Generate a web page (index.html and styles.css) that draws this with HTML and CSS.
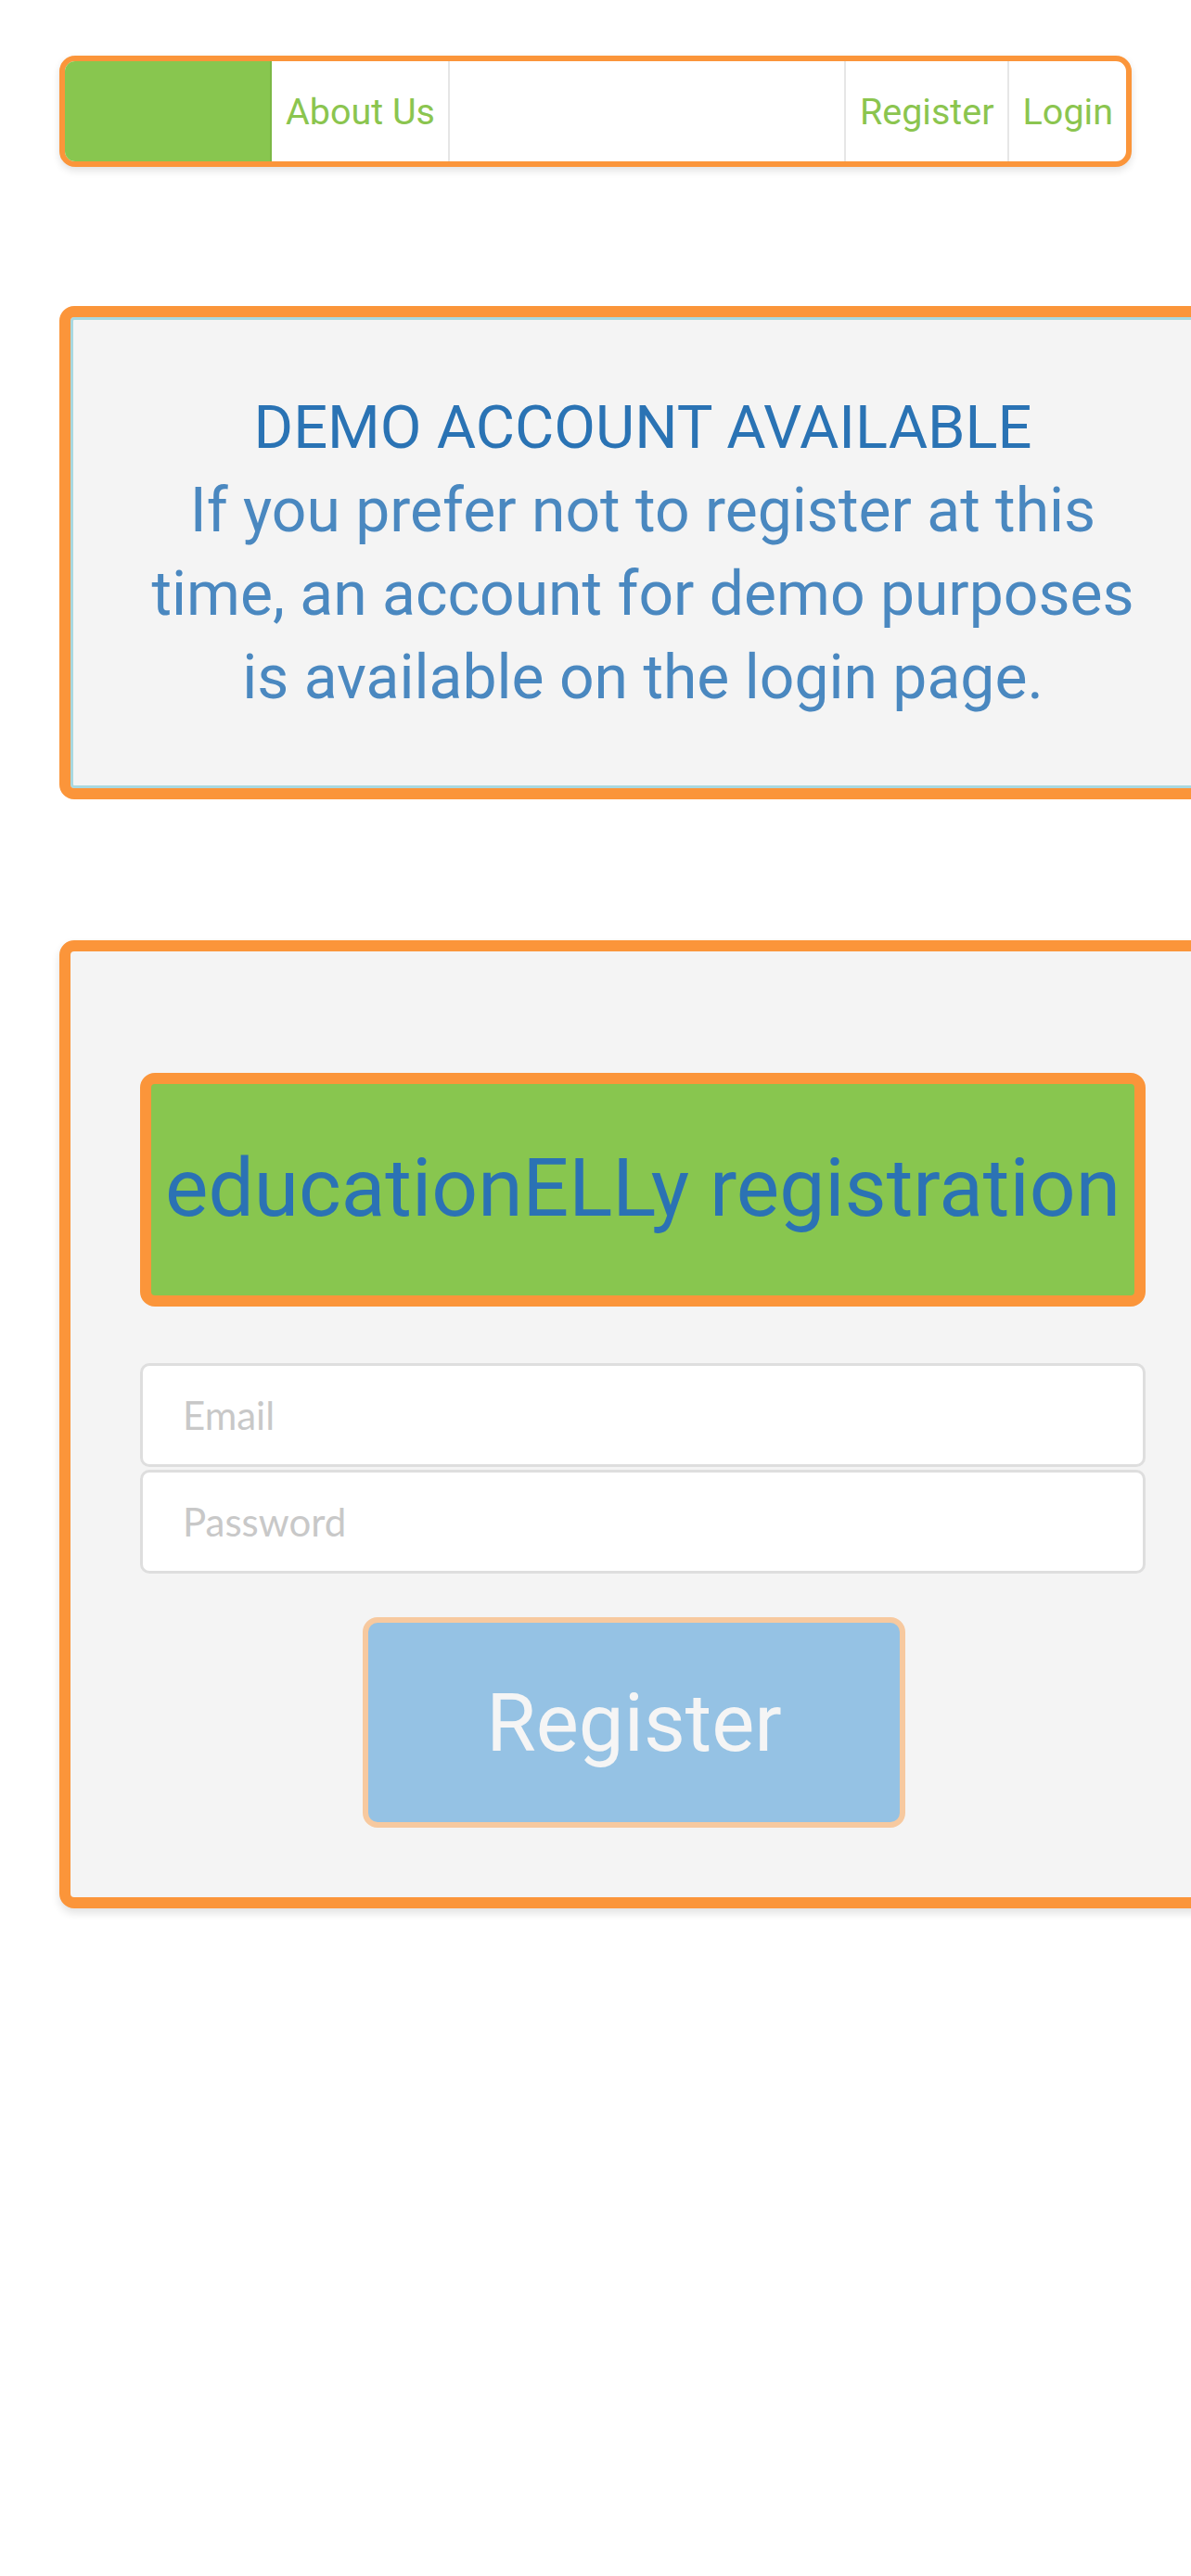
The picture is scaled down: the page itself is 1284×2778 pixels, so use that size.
FILE: index.html
```html
<!DOCTYPE html>
<html lang="en">
<head>
<meta charset="utf-8">
<title>educationELLy registration</title>
<link rel="stylesheet" href="styles.css">
</head>
<body>
<div class="page">
  <nav class="navbar">
    <div class="brand"></div>
    <a class="nav-link nav-about" href="#">About Us</a>
    <div class="nav-spacer"></div>
    <a class="nav-link nav-register" href="#">Register</a>
    <a class="nav-link nav-login" href="#">Login</a>
  </nav>

  <section class="demo-box">
    <p class="demo-title">DEMO ACCOUNT AVAILABLE</p>
    <p class="demo-text">If you prefer not to register at this<br>time, an account for demo purposes<br>is available on the login page.</p>
  </section>

  <section class="form-box">
    <h1 class="form-title">educationELLy registration</h1>
    <form class="form">
      <input class="field" type="email" placeholder="Email">
      <input class="field" type="password" placeholder="Password">
      <button class="submit" type="button">Register</button>
    </form>
  </section>
</div>
</body>
</html>
```

FILE: styles.css
```css
html, body {
  margin: 0;
  padding: 0;
  background: #ffffff;
  overflow-x: hidden;
}

body {
  font-family: Roboto, "Liberation Sans", sans-serif;
}

.page {
  padding: 60px 0 200px 64px;
}

/* NAVBAR */
.navbar {
  width: 1156px;
  height: 120px;
  box-sizing: border-box;
  border: 6px solid #fb953a;
  border-radius: 17px;
  display: flex;
  align-items: stretch;
  overflow: hidden;
  background: #ffffff;
  box-shadow: 0 4px 8px rgba(0, 0, 0, 0.12);
}

.brand {
  width: 221px;
  background: #88c64f;
  border-right: 2px solid #7bb845;
}

.nav-link {
  display: flex;
  align-items: center;
  padding: 0 14px 0 15px;
  font-size: 39.5px;
  color: #8bc54f;
  text-decoration: none;
}

.nav-about {
  border-right: 2px solid #e6e6e6;
}

.nav-spacer {
  flex: 1;
}

.nav-register {
  border-left: 2px solid #e6e6e6;
  border-right: 2px solid #e6e6e6;
}

/* DEMO BOX */
.demo-box {
  margin-top: 150px;
  width: 1258px;
  box-sizing: border-box;
  border: 12px solid #fb953a;
  border-radius: 16px;
  background: #f4f4f4;
  box-shadow: inset 0 0 0 3px #a8d8e0;
  padding: 74px 20px;
  text-align: center;
}

.demo-title,
.demo-text {
  margin: 0;
  line-height: 90px;
}

.demo-title {
  font-size: 65px;
  color: #2a73b4;
}

.demo-text {
  font-size: 66px;
  color: #4a88c0;
}

/* FORM BOX */
.form-box {
  margin-top: 152px;
  width: 1258px;
  box-sizing: border-box;
  border: 12px solid #fb953a;
  border-radius: 16px;
  background: #f4f4f4;
  padding: 131px 75px 75px 75px;
  box-shadow: 0 5px 10px rgba(0, 0, 0, 0.12);
}

.form-title {
  margin: 0;
  box-sizing: border-box;
  border: 12px solid #fb953a;
  border-radius: 16px;
  background: #88c64f;
  color: #2b72b4;
  font-size: 87.5px;
  font-weight: 400;
  line-height: 102px;
  padding: 61px 0 65px;
  text-align: center;
  white-space: nowrap;
}

.form {
  margin-top: 61px;
  display: flex;
  flex-direction: column;
  gap: 3px;
}

.field {
  display: block;
  width: 100%;
  height: 112px;
  box-sizing: border-box;
  margin: 0;
  border: 3px solid #dedede;
  border-radius: 10px;
  background: #ffffff;
  padding: 0 0 0 43px;
  font-family: Lato, "Liberation Sans", sans-serif;
  font-size: 42px;
  color: #555555;
  outline: none;
}

.field::placeholder {
  color: #c8c8c8;
  opacity: 1;
}

.submit {
  align-self: flex-start;
  margin: 44px 0 0 240px;
  width: 585px;
  height: 227px;
  box-sizing: border-box;
  border: 6px solid #f7c99f;
  border-radius: 16px;
  background: #95c2e4;
  color: #f5f5f5;
  font-family: Roboto, "Liberation Sans", sans-serif;
  font-size: 87px;
  padding: 0;
}
```
